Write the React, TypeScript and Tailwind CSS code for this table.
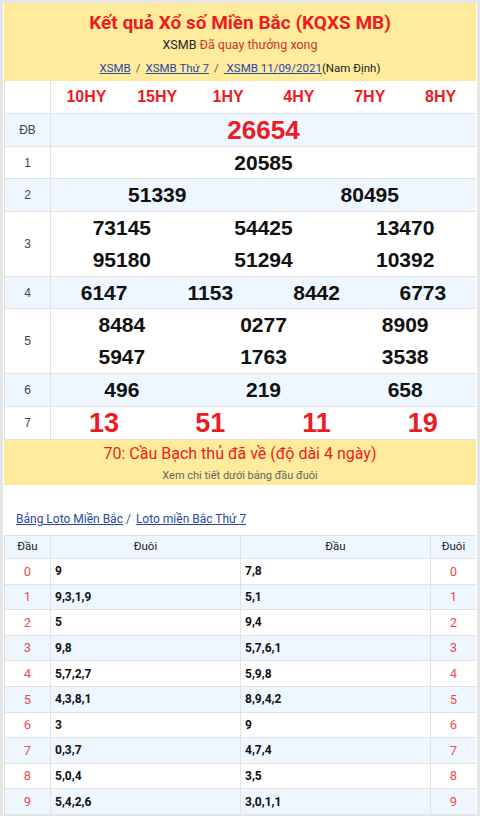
import React from 'react'

const prizes: { label: string; cols: number; nums: string[]; red?: boolean; size: string; blue: boolean }[] = [
  { label: 'ĐB', cols: 1, nums: ['26654'], red: true, size: 'text-[26px]', blue: true },
  { label: '1', cols: 1, nums: ['20585'], size: 'text-[21px]', blue: false },
  { label: '2', cols: 2, nums: ['51339', '80495'], size: 'text-[21px]', blue: true },
  { label: '3', cols: 3, nums: ['73145', '54425', '13470', '95180', '51294', '10392'], size: 'text-[21px]', blue: false },
  { label: '4', cols: 4, nums: ['6147', '1153', '8442', '6773'], size: 'text-[21px]', blue: true },
  { label: '5', cols: 3, nums: ['8484', '0277', '8909', '5947', '1763', '3538'], size: 'text-[21px]', blue: false },
  { label: '6', cols: 3, nums: ['496', '219', '658'], size: 'text-[21px]', blue: true },
  { label: '7', cols: 4, nums: ['13', '51', '11', '19'], red: true, size: 'text-[27px]', blue: false },
]

const gridCols: Record<number, string> = {
  1: 'grid-cols-1',
  2: 'grid-cols-2',
  3: 'grid-cols-3',
  4: 'grid-cols-4',
}

const loto = [
  ['9', '7,8'],
  ['9,3,1,9', '5,1'],
  ['5', '9,4'],
  ['9,8', '5,7,6,1'],
  ['5,7,2,7', '5,9,8'],
  ['4,3,8,1', '8,9,4,2'],
  ['3', '9'],
  ['0,3,7', '4,7,4'],
  ['5,0,4', '3,5'],
  ['5,4,2,6', '3,0,1,1'],
]

export default function App() {
  return (
    <div className="min-h-[816px] bg-[#e6e6e6] pl-[3px] pr-[3px] pt-[3px] font-['Liberation_Sans',Arial,sans-serif]">
      <div className="bg-white pl-px pr-px">
        {/* header */}
        <div className="flex h-[78px] flex-col items-center bg-[#ffeb9c] pt-[8px] font-['Roboto',sans-serif]">
          <h1 className="text-[19px] font-bold leading-[24px] text-[#ed1c24]">Kết quả Xổ số Miền Bắc (KQXS MB)</h1>
          <p className="mt-[2px] text-[12.5px] leading-[16px] text-[#222]">
            XSMB <span className="text-[#d0342c]">Đã quay thưởng xong</span>
          </p>
          <p className="mt-[7px] text-[11.5px] leading-[16px] text-[#222]">
            <a className="text-[#2948a3] underline">XSMB</a>
            <span className="mx-[5px] text-[#555]">/</span>
            <a className="text-[#2948a3] underline">XSMB Thứ 7</a>
            <span className="mx-[5px] text-[#555]">/</span>
            <a className="text-[#2948a3] underline">&nbsp;XSMB 11/09/2021</a>(Nam Định)
          </p>
        </div>

        {/* prize table */}
        <div className="border-l border-[#e2e2e2]">
          <div className="flex h-[33px] border-b border-[#e2e2e2]">
            <div className="w-[46px] shrink-0 border-r border-[#e2e2e2]" />
            <div className="grid flex-1 grid-cols-6 items-center text-center text-[16px] font-bold text-[#ed1c24]">
              <span>10HY</span>
              <span>15HY</span>
              <span>1HY</span>
              <span>4HY</span>
              <span>7HY</span>
              <span>8HY</span>
            </div>
          </div>
          {prizes.map((p) => {
            const rows = Math.ceil(p.nums.length / p.cols)
            return (
              <div
                key={p.label}
                className={`flex border-b border-[#e2e2e2] ${rows > 1 ? 'h-[65px]' : p.label === '1' || p.label === '4' ? 'h-[32px]' : 'h-[33px]'} ${p.blue ? 'bg-[#eef6ff]' : 'bg-white'}`}
              >
                <div className="flex w-[46px] shrink-0 items-center justify-center border-r border-[#e2e2e2] text-[12px] text-[#444]">
                  {p.label}
                </div>
                <div className={`grid flex-1 ${gridCols[p.cols]} items-center text-center font-bold ${p.size} ${p.red ? 'text-[#ed1c24]' : 'text-[#111]'}`}>
                  {p.nums.map((n, i) => (
                    <span key={i} className="leading-[32px]">
                      {n}
                    </span>
                  ))}
                </div>
              </div>
            )
          })}
        </div>

        {/* banner */}
        <div className="flex h-[45px] flex-col items-center bg-[#ffeb9c] pt-[3px] font-['Roboto',sans-serif]">
          <p className="text-[16px] leading-[22px] text-[#ed1c24]">70: Cầu Bạch thủ đã về (độ dài 4 ngày)</p>
          <p className="text-[11px] leading-[22px] text-[#666]">Xem chi tiết dưới bảng đầu đuôi</p>
        </div>

        <div className="flex h-[50px] items-end pb-[7px] pl-[12px] font-['Roboto',sans-serif] text-[12px] text-[#2948a3]">
          <a className="underline">Bảng Loto Miền Bắc</a>
          <span className="mx-[3px] text-[#555]">/</span>
          <a className="ml-[2px] underline">Loto miền Bắc Thứ 7</a>
        </div>

        {/* loto table */}
        <div className="border-l border-t border-[#e2e2e2] font-['Roboto',sans-serif]">
          <div className="flex h-[23px] items-center border-b border-[#e2e2e2] bg-[#eef6ff] text-center text-[11.5px] text-[#222]">
            <div className="flex h-full w-[46px] items-center justify-center border-r border-[#e2e2e2]">Đầu</div>
            <div className="flex h-full w-[190px] items-center justify-center border-r border-[#e2e2e2]">Đuôi</div>
            <div className="flex h-full w-[190px] items-center justify-center border-r border-[#e2e2e2]">Đầu</div>
            <div className="flex h-full flex-1 items-center justify-center">Đuôi</div>
          </div>
          {loto.map(([a, b], i) => (
            <div
              key={i}
              className={`flex h-[25.6px] items-center border-b border-[#e2e2e2] ${i % 2 === 1 ? 'bg-[#eef6ff]' : 'bg-white'}`}
            >
              <div className="flex h-full w-[46px] items-center justify-center border-r border-[#e2e2e2] text-[13px] text-[#ee4d52]">
                {i}
              </div>
              <div className="flex h-full w-[190px] items-center border-r border-[#e2e2e2] pl-[4px] text-[12px] font-bold text-[#111]">
                {a}
              </div>
              <div className="flex h-full w-[190px] items-center border-r border-[#e2e2e2] pl-[4px] text-[12px] font-bold text-[#111]">
                {b}
              </div>
              <div className="flex h-full flex-1 items-center justify-center text-[13px] text-[#ee4d52]">{i}</div>
            </div>
          ))}
        </div>
      </div>
    </div>
  )
}
